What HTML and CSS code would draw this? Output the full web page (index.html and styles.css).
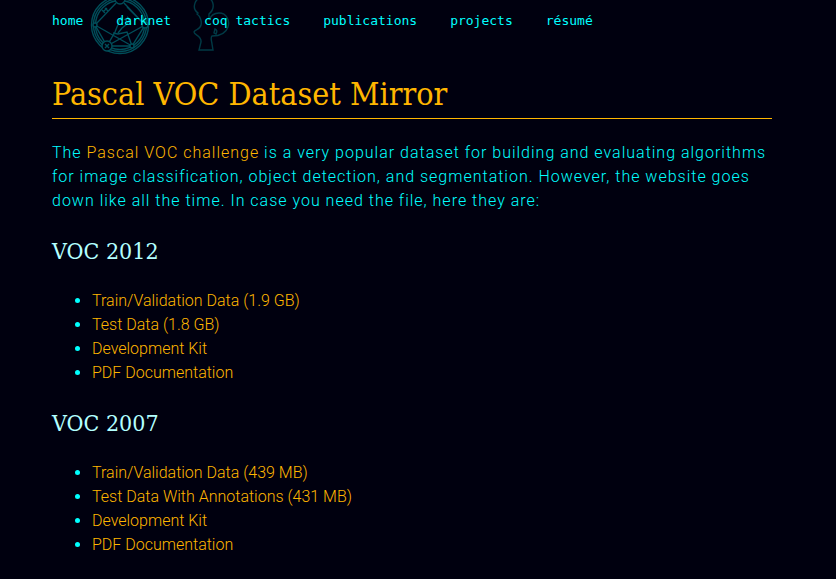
FILE: index.html
```html
<!DOCTYPE html>
<html lang="en">
<head>
<meta charset="utf-8">
<title>Pascal VOC Dataset Mirror</title>
<link rel="stylesheet" href="styles.css">
</head>
<body>
<div class="page">
  <nav class="nav">
    <a href="#">home</a>
    <a class="has-mark" href="#">
      <svg class="mark seal" viewBox="90 -5 60 60" aria-hidden="true">
        <circle cx="120" cy="25" r="28.5"/>
        <circle cx="120" cy="25" r="26.5"/>
        <circle cx="120" cy="25" r="24.5"/>
        <path d="M116 3 95 25 107 46 132 46 145 25 124 3M95 25 132 46M145 25 107 46 115 32 121 17M113 33l5 1 9-2 5 14M127 7l16 16"/>
        <path d="M127 17q4 2 0 7l-5 4-4 5M124 19l3 2M102 10l3 3M105 8l3 3M103 12l4-4"/>
        <circle class="node" cx="120" cy="-1" r="5"/>
        <circle class="node" cx="107" cy="46" r="5"/>
        <circle class="node" cx="132" cy="46" r="2"/>
        <circle class="node" cx="95" cy="25" r="2"/>
        <circle class="node" cx="145" cy="25" r="3"/>
        <path d="M105 44l4 4M109 44l-4 4"/>
      </svg>
      <span>darknet</span>
    </a>
    <a class="has-mark" href="#">
      <svg class="mark rooster" viewBox="190 -5 45 60" aria-hidden="true">
        <path d="M198 13c-7-5-3-16 6-16 10 0 12 11 5 17v6c2-5 6-7 10-7 8 0 11 8 9 14-2 6-8 9-16 9-2 2 0 6 0 8l1 6h-14l2-8c1-6-7-7-7-10 1-3 6-2 7-7 1-4-1-9-4-11ZM215 29q3 1 1 5l-2-1Z"/>
      </svg>
      <span>coq tactics</span>
    </a>
    <a href="#">publications</a>
    <a href="#">projects</a>
    <a href="#">résumé</a>
  </nav>
  <main>
    <h1>Pascal VOC Dataset Mirror</h1>
    <p>The <a href="#">Pascal VOC challenge</a> is a very popular dataset for building and evaluating algorithms for image classification, object detection, and segmentation. However, the website goes down like all the time. In case you need the file, here they are:</p>
    <h2>VOC 2012</h2>
    <ul>
      <li><a href="#">Train/Validation Data (1.9 GB)</a></li>
      <li><a href="#">Test Data (1.8 GB)</a></li>
      <li><a href="#">Development Kit</a></li>
      <li><a href="#">PDF Documentation</a></li>
    </ul>
    <h2>VOC 2007</h2>
    <ul>
      <li><a href="#">Train/Validation Data (439 MB)</a></li>
      <li><a href="#">Test Data With Annotations (431 MB)</a></li>
      <li><a href="#">Development Kit</a></li>
      <li><a href="#">PDF Documentation</a></li>
    </ul>
  </main>
</div>
</body>
</html>
```
FILE: styles.css
```css
body {
  margin: 0;
  padding: 0 12px 0 0;
  background: #00000f;
  color: #00ffff;
  font: 300 16px/24px Roboto, sans-serif;
}
a {
  color: #ffb600;
  text-decoration: none;
}
.page {
  max-width: 720px;
  margin: 0 auto;
  padding: 0 32px;
}
.nav {
  display: flex;
  gap: 33px;
  padding: 9px 0;
  font: 13px/24px "DejaVu Sans Mono", monospace;
}
.nav a {
  color: #00ffff;
}
.has-mark {
  position: relative;
}
.has-mark span {
  position: relative;
}
.mark {
  position: absolute;
  top: -14px;
  height: 60px;
  fill: none;
  stroke: #004e5a;
  stroke-width: 1.4;
}
.seal {
  left: -26px;
  width: 60px;
}
.rooster {
  left: -14px;
  width: 45px;
  stroke: #003a46;
}
.node {
  fill: #00000f;
}
h1,
h2 {
  font-family: "Roboto Slab", "DejaVu Serif Condensed", "DejaVu Serif", serif;
  font-weight: 400;
}
h1 {
  margin: 28px 0 22px;
  border-bottom: 1px solid #ffb600;
  color: #ffb600;
  font-size: 32px;
  line-height: 48px;
}
p {
  margin: 0 0 24px;
  letter-spacing: 1px;
}
h2 {
  margin: 24px 0;
  color: #b3ffff;
  font-size: 23px;
  line-height: 28px;
}
ul {
  margin: 0;
  padding-left: 40px;
}
```
